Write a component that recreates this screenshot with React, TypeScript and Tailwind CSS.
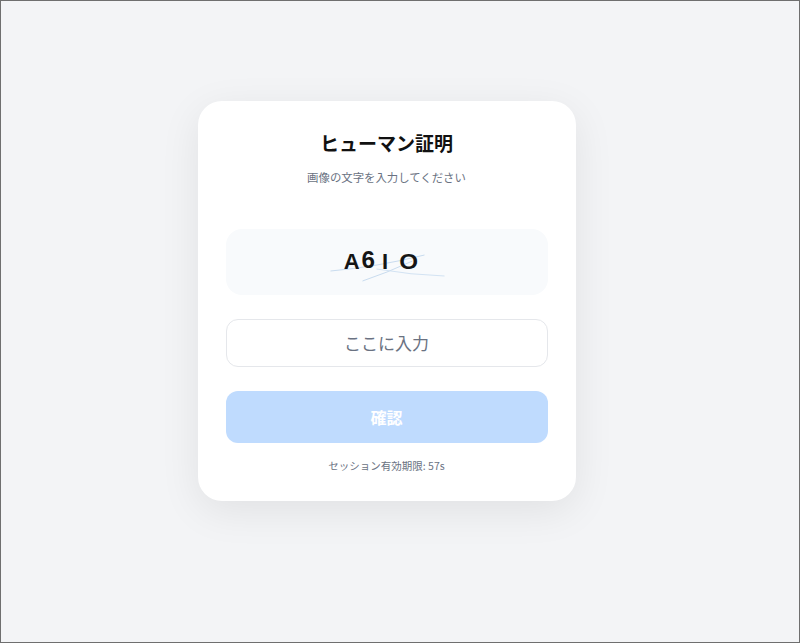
import { useState } from "react";

const jp = { fontFamily: '"Noto Sans CJK JP", "Noto Sans", sans-serif' };
const latin = { fontFamily: '"Liberation Sans", Arial, sans-serif' };

function Captcha() {
  return (
    <div className="relative flex h-[66px] items-center justify-center rounded-2xl bg-[#f8fafc]">
      <svg className="absolute inset-0 h-full w-full" viewBox="0 0 321 66">
        <path d="M104 42 Q150 38 198 26" stroke="#c9dcef" strokeWidth="1" fill="none" />
        <path d="M136 52 Q160 44 186 32" stroke="#c9dcef" strokeWidth="1" fill="none" />
        <path d="M150 40 Q185 46 218 47" stroke="#d3e3f3" strokeWidth="1" fill="none" />
      </svg>
      <div className="relative flex items-end pr-[12px] text-[22px] font-bold leading-none text-[#151515]" style={latin}>
        <span className="mr-[2px]">A</span>
        <span className="mr-[8px] -translate-y-[2px] scale-110">6</span>
        <span className="mr-[12px]">I</span>
        <span className="scale-x-110">O</span>
      </div>
    </div>
  );
}

export default function App() {
  const [code, setCode] = useState("");

  return (
    <div className="flex h-[643px] w-[800px] items-start justify-center border border-[#6f6f6f] bg-[#f3f4f6] pr-[27px] pt-[100px]" style={jp}>
      <div className="w-[378px] rounded-3xl bg-white px-7 pb-[27px] pt-7 shadow-[0_10px_40px_rgba(0,0,0,0.08)]">
        <h1 className="text-center text-[19px] font-bold leading-7 text-[#111]">ヒューマン証明</h1>
        <p className="mt-3 text-center text-[11.4px] leading-4 text-gray-500">画像の文字を入力してください</p>

        <div className="mt-11">
          <Captcha />
        </div>

        <input
          type="text"
          value={code}
          onChange={(e) => setCode(e.target.value)}
          placeholder="ここに入力"
          className="mt-6 h-12 w-full rounded-xl border border-gray-200 pb-0.5 text-center text-[17px] text-gray-700 outline-none placeholder:text-gray-500"
          style={jp}
        />

        <button
          disabled={!code}
          className="mt-6 h-[52px] w-full rounded-xl bg-[#bfdbfe] text-[16px] font-bold text-white"
          style={jp}
        >
          確認
        </button>

        <p className="mt-[15px] text-center text-[10.5px] leading-4 text-gray-500">セッション有効期限: 57s</p>
      </div>
    </div>
  );
}
